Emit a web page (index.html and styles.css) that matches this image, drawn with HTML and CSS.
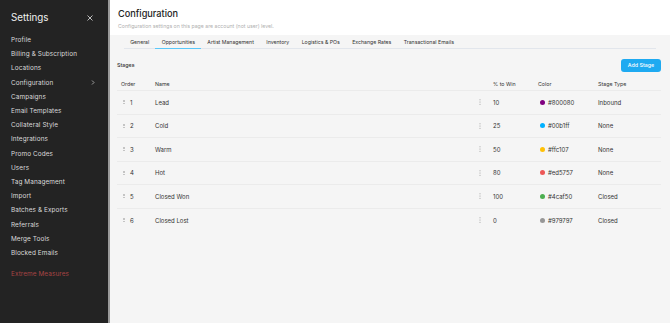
FILE: index.html
```html
<!DOCTYPE html>
<html>
<head>
<meta charset="utf-8">
<link rel="stylesheet" href="styles.css">
</head>
<body>
<div class="app">
  <aside class="sidebar">
    <div class="side-head">
      <span class="side-title">Settings</span>
      <svg class="close" width="6" height="6" viewBox="0 0 6 6"><path d="M0.5 0.5L5.5 5.5M5.5 0.5L0.5 5.5" stroke="#d0d0d0" stroke-width="0.9" fill="none"/></svg>
    </div>
    <nav class="menu">
      <span class="item">Profile</span>
      <span class="item">Billing &amp; Subscription</span>
      <span class="item">Locations</span>
      <span class="item has-sub">Configuration <svg width="4" height="5" viewBox="0 0 4 5"><path d="M1 0.5L3 2.5L1 4.5" stroke="#bbb" stroke-width="0.8" fill="none"/></svg></span>
      <span class="item">Campaigns</span>
      <span class="item">Email Templates</span>
      <span class="item">Collateral Style</span>
      <span class="item">Integrations</span>
      <span class="item">Promo Codes</span>
      <span class="item">Users</span>
      <span class="item">Tag Management</span>
      <span class="item">Import</span>
      <span class="item">Batches &amp; Exports</span>
      <span class="item">Referrals</span>
      <span class="item">Merge Tools</span>
      <span class="item">Blocked Emails</span>
      <span class="item danger">Extreme Measures</span>
    </nav>
  </aside>
  <main class="main">
    <header class="page-head">
      <h1 class="page-title">Configuration</h1>
      <p class="page-sub">Configuration settings on this page are account (not user) level.</p>
    </header>
    <section class="content">
      <div class="tabs">
        <span class="tab">General</span>
        <span class="tab active">Opportunities</span>
        <span class="tab">Artist Management</span>
        <span class="tab">Inventory</span>
        <span class="tab">Logistics &amp; POs</span>
        <span class="tab">Exchange Rates</span>
        <span class="tab">Transactional Emails</span>
      </div>
      <div class="stages-bar">
        <span class="stages-label">Stages</span>
        <button class="btn">Add Stage</button>
      </div>
      <div class="table">
        <div class="row head">
          <div class="c-order">Order</div>
          <div class="c-name">Name</div>
          <div class="c-menu"></div>
          <div class="c-win">% to Win</div>
          <div class="c-color">Color</div>
          <div class="c-type">Stage Type</div>
        </div>
        <div class="row">
          <div class="c-order"><span class="grip"></span>1</div>
          <div class="c-name">Lead</div>
          <div class="c-menu"><svg class="kebab" width="2" height="6" viewBox="0 0 2 6"><circle cx="1" cy="0.8" r="0.55"/><circle cx="1" cy="3" r="0.55"/><circle cx="1" cy="5.2" r="0.55"/></svg></div>
          <div class="c-win">10</div>
          <div class="c-color"><span class="dot" style="background:#800080"></span>#800080</div>
          <div class="c-type">Inbound</div>
        </div>
        <div class="row">
          <div class="c-order"><span class="grip"></span>2</div>
          <div class="c-name">Cold</div>
          <div class="c-menu"><svg class="kebab" width="2" height="6" viewBox="0 0 2 6"><circle cx="1" cy="0.8" r="0.55"/><circle cx="1" cy="3" r="0.55"/><circle cx="1" cy="5.2" r="0.55"/></svg></div>
          <div class="c-win">25</div>
          <div class="c-color"><span class="dot" style="background:#00b1ff"></span>#00b1ff</div>
          <div class="c-type">None</div>
        </div>
        <div class="row">
          <div class="c-order"><span class="grip"></span>3</div>
          <div class="c-name">Warm</div>
          <div class="c-menu"><svg class="kebab" width="2" height="6" viewBox="0 0 2 6"><circle cx="1" cy="0.8" r="0.55"/><circle cx="1" cy="3" r="0.55"/><circle cx="1" cy="5.2" r="0.55"/></svg></div>
          <div class="c-win">50</div>
          <div class="c-color"><span class="dot" style="background:#ffc107"></span>#ffc107</div>
          <div class="c-type">None</div>
        </div>
        <div class="row">
          <div class="c-order"><span class="grip"></span>4</div>
          <div class="c-name">Hot</div>
          <div class="c-menu"><svg class="kebab" width="2" height="6" viewBox="0 0 2 6"><circle cx="1" cy="0.8" r="0.55"/><circle cx="1" cy="3" r="0.55"/><circle cx="1" cy="5.2" r="0.55"/></svg></div>
          <div class="c-win">80</div>
          <div class="c-color"><span class="dot" style="background:#ed5757"></span>#ed5757</div>
          <div class="c-type">None</div>
        </div>
        <div class="row">
          <div class="c-order"><span class="grip"></span>5</div>
          <div class="c-name">Closed Won</div>
          <div class="c-menu"><svg class="kebab" width="2" height="6" viewBox="0 0 2 6"><circle cx="1" cy="0.8" r="0.55"/><circle cx="1" cy="3" r="0.55"/><circle cx="1" cy="5.2" r="0.55"/></svg></div>
          <div class="c-win">100</div>
          <div class="c-color"><span class="dot" style="background:#4caf50"></span>#4caf50</div>
          <div class="c-type">Closed</div>
        </div>
        <div class="row last">
          <div class="c-order"><span class="grip"></span>6</div>
          <div class="c-name">Closed Lost</div>
          <div class="c-menu"><svg class="kebab" width="2" height="6" viewBox="0 0 2 6"><circle cx="1" cy="0.8" r="0.55"/><circle cx="1" cy="3" r="0.55"/><circle cx="1" cy="5.2" r="0.55"/></svg></div>
          <div class="c-win">0</div>
          <div class="c-color"><span class="dot" style="background:#979797"></span>#979797</div>
          <div class="c-type">Closed</div>
        </div>
      </div>
    </section>
  </main>
</div>
</body>
</html>
```

FILE: styles.css
```css
* { box-sizing: border-box; }
html, body { margin: 0; padding: 0; }
body {
  width: 670px;
  height: 323px;
  overflow: hidden;
  font-family: Inter, "Liberation Sans", sans-serif;
  background: #f5f5f5;
  -webkit-font-smoothing: antialiased;
}
.app { display: flex; height: 323px; }

.sidebar {
  width: 110px;
  flex: none;
  background: #232323;
  color: #dcdcdc;
  border-right: 2px solid #9a9a9a;
}
.side-head {
  display: flex;
  align-items: center;
  justify-content: space-between;
  padding: 8px 15px 0 11px;
  height: 26px;
}
.side-title { font-size: 9.8px; color: #f0f0f0; font-weight: 400; }
.close { display: block; margin-top: 2px; }
.menu { display: flex; flex-direction: column; padding-top: 7px; }
.item {
  display: flex;
  align-items: center;
  height: 14.2px;
  padding-left: 11px;
  padding-right: 13px;
  font-size: 6.4px;
  font-weight: 400;
  letter-spacing: 0.1px;
  color: #dadada;
}
.has-sub { justify-content: space-between; }
.danger { color: #a84444; margin-top: 7px; }

.main { flex: 1; display: flex; flex-direction: column; }
.page-head {
  background: #fff;
  height: 35px;
  padding: 8px 8px 0 8px;
}
.page-title {
  margin: 0;
  font-size: 9.2px;
  font-weight: 500;
  color: #222;
  line-height: 12px;
}
.page-sub {
  margin: 3px 0 0;
  font-size: 5.2px;
  color: #b0b0b0;
}
.content { padding: 0 9px 0 7px; }
.tabs {
  display: flex;
  margin: 0 5px 0 7px;
  border-bottom: 1px solid #e2e6ec;
  height: 14px;
}
.tab {
  padding: 0 6.2px;
  font-size: 5.2px;
  color: #333;
  display: flex;
  align-items: center;
  border-bottom: 1px solid transparent;
  margin-bottom: -1px;
}
.tab.active { border-bottom-color: #5ac8fa; }

.stages-bar {
  display: flex;
  align-items: center;
  justify-content: space-between;
  margin-top: 9px;
  height: 14px;
}
.stages-label { font-size: 5.3px; font-weight: 500; color: #333; }
.btn {
  border: none;
  background: #1eaaf1;
  color: #fff;
  font-family: inherit;
  font-size: 5.3px;
  font-weight: 500;
  width: 40px;
  height: 13px;
  border-radius: 3px;
  padding: 0;
}
.table { margin-top: 5px; }
.row {
  display: flex;
  align-items: center;
  height: 23.5px;
  border-bottom: 1px solid #ebebeb;
  font-size: 6px;
  color: #333;
}
.row.head { height: 14px; font-size: 5.3px; }
.row.last { border-bottom: none; }
.c-order { width: 38px; padding-left: 4px; display: flex; align-items: center; }
.c-name { width: 324px; }
.c-menu { width: 14px; display: flex; align-items: center; }
.c-win { width: 45px; }
.c-color { width: 60px; display: flex; align-items: center; }
.c-type { flex: 1; }
.grip {
  width: 2px; height: 4px;
  border-left: 1px dotted #c4c4c4;
  border-right: 1px dotted #c4c4c4;
  margin: 0 5px 0 2px;
}
.kebab { display: block; fill: #9a9a9a; }
.dot {
  width: 5px; height: 5px;
  border-radius: 50%;
  margin-right: 3px;
  margin-left: 2px;
}
```
